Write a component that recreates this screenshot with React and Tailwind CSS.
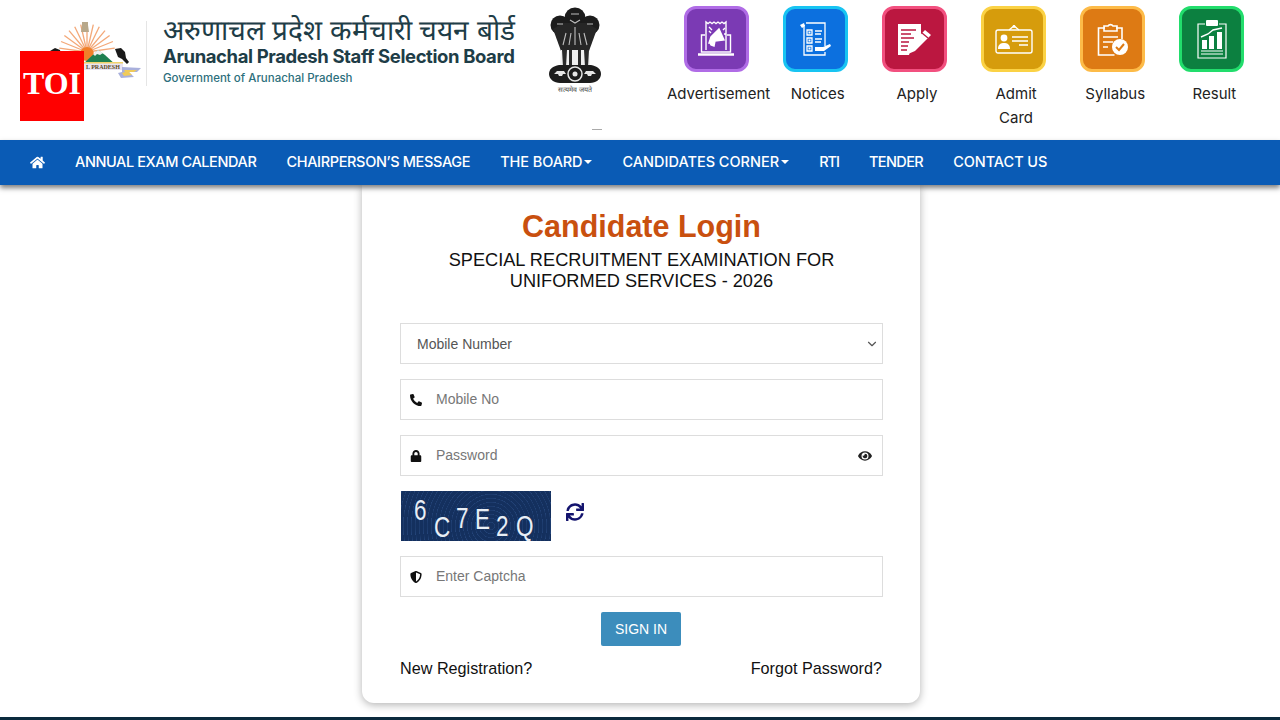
import { FaHome, FaPhoneAlt, FaLock, FaEye, FaShieldAlt, FaSync } from 'react-icons/fa'
import { FiChevronDown } from 'react-icons/fi'

const NAV = [
  { label: 'ANNUAL EXAM CALENDAR', cls: 'tracking-[-0.4px]' },
  { label: 'CHAIRPERSON\u2019S MESSAGE', cls: 'tracking-[-0.35px]' },
  { label: 'THE BOARD', cls: 'tracking-[-0.1px]', caret: true },
  { label: 'CANDIDATES CORNER', cls: 'tracking-[0px]', caret: true },
  { label: 'RTI', cls: 'tracking-[-1px]' },
  { label: 'TENDER', cls: 'tracking-[-0.6px]' },
  { label: 'CONTACT US', cls: 'tracking-[-0.05px]' },
]

function AdIcon() {
  return (
    <svg viewBox="0 0 36 38" className="h-[38px] w-[36px]" fill="none" stroke="white" strokeWidth="1.4">
      <path d="M7 15H3.5v17h29V15H29" />
      <path d="M0 34.5h36" strokeWidth="2.6" />
      <path d="M8 30V2l2 1.5L12 2l2 1.5L16 2l2 1.5L20 2l2 1.5L24 2l2 1.5L28 2v28" />
      <path d="M11 23l2-6 8-8 5 11-9 1-1 5-3-1-1-2z" fill="white" />
      <path d="M25 10l2-2M26 14h2M11 7l3 3M11 11l2 2" />
    </svg>
  )
}

function NoticeIcon() {
  return (
    <svg viewBox="0 0 32 34" className="h-[34px] w-[32px]" fill="none" stroke="white" strokeWidth="1.3">
      <path d="M7 1h19v23M5 3v30h21v-3" />
      <path d="M1 3l4-2 1 3-3 2z" fill="white" stroke="none" />
      <path d="M8 8h5v5H8zM8 16h5v5H8zM8 24h5v5H8z" />
      <path d="M9.5 9.5h2v2h-2zM9.5 17.5h2v2h-2zM9.5 25.5h2v2h-2z" fill="white" stroke="none" />
      <path d="M16 9h7M16 12h6M16 17h7M16 20h6" />
      <path d="M16 25h8l7-3 1 2-7 5h-9z" fill="white" stroke="none" />
    </svg>
  )
}

function ApplyIcon() {
  return (
    <svg viewBox="0 0 34 33" className="h-[33px] w-[34px]">
      <path d="M1 1h23v13L14 25l-2 7H1z" fill="white" />
      <path d="M4 7h15M4 11h10M4 15h13M4 19h8M4 23h7M4 27h6" stroke="#bb1740" strokeWidth="1.4" />
      <path d="M28 7l6 5-16 16-7 3 2-8z" fill="white" />
      <path d="M25 10l6 5" stroke="#bb1740" strokeWidth="1.3" />
    </svg>
  )
}

function AdmitIcon() {
  return (
    <svg viewBox="0 0 38 30" className="h-[30px] w-[38px]" fill="none" stroke="white" strokeWidth="1.4">
      <rect x="1" y="6" width="36" height="23" rx="2" />
      <path d="M14 6l5-4 5 4" />
      <circle cx="19" cy="2.5" r="1.4" fill="white" stroke="none" />
      <circle cx="9" cy="14" r="3.4" fill="white" stroke="none" />
      <path d="M3 25c0-5 3-6 6-6s6 1 6 6z" fill="white" stroke="none" />
      <path d="M17 13h16M17 17h16M24 21h9" />
    </svg>
  )
}

function SyllabusIcon() {
  return (
    <svg viewBox="0 0 31 34" className="h-[34px] w-[31px]" fill="none" stroke="white" strokeWidth="1.6">
      <path d="M8 6H1.5v27h16M19 6h6v11" />
      <path d="M7 9V4h4a3 3 0 0 1 5 0h4v5z" />
      <path d="M6 15h15M6 20h10M6 25h5" />
      <circle cx="23" cy="25" r="8" fill="white" stroke="none" />
      <path d="M19 25l3 3 5-6" stroke="#dd7a14" strokeWidth="2" />
    </svg>
  )
}

function ResultIcon() {
  return (
    <svg viewBox="0 0 30 40" className="h-[40px] w-[30px]" fill="none" stroke="white" strokeWidth="1.2">
      <path d="M8 5H1v34h28V5h-7" />
      <rect x="9" y="1" width="12" height="6" rx="1" fill="white" stroke="none" />
      <path d="M4 18l7-3 5-4 9-2" strokeWidth="1.4" />
      <path d="M5 21h5v9H5zM12 17h5v13h-5zM20 13h5v17h-5z" fill="white" stroke="none" />
      <path d="M4 32h22M4 35h22" />
    </svg>
  )
}

const TILES = [
  { lines: ['Advertisement'], cls: 'bg-[#7b3ab4] border-[#b06ce6]', Icon: AdIcon },
  { lines: ['Notices'], cls: 'bg-[#0c70df] border-[#18c4f2]', Icon: NoticeIcon },
  { lines: ['Apply'], cls: 'bg-[#bb1740] border-[#f2507f]', Icon: ApplyIcon },
  { lines: ['Admit', 'Card'], cls: 'bg-[#d69c0c] border-[#fbd245]', Icon: AdmitIcon },
  { lines: ['Syllabus'], cls: 'bg-[#dd7a14] border-[#fdbb48]', Icon: SyllabusIcon },
  { lines: ['Result'], cls: 'bg-[#0c8040] border-[#22dd6c]', Icon: ResultIcon },
]

function StateLogo() {
  const rays = [-82, -68, -54, -40, -26, -13, 0, 13, 26, 40, 54, 68, 82]
  return (
    <svg viewBox="0 0 100 70" className="h-[70px] w-[100px]">
      {rays.map(r => (
        <path key={r} d="M43 31V3" stroke="#f3a878" strokeWidth="1.3" transform={`rotate(${r} 43 31)`} />
      ))}
      <path d="M38 1h6v3l1 7h-8l1-7z" fill="#b8a88a" />
      <circle cx="43" cy="33" r="7" fill="#f0802a" />
      <path d="M37 45l17-16 7 5 12 11z" fill="#1f8050" />
      <path d="M49 33l5-4 5 3-3 2-3-1-2 2z" fill="#f0f0f0" />
      <path d="M6 30l5-3 5 2 1 4-6 1z" fill="#1a1a1a" />
      <path d="M71 28l6-1 4 4 1 6 3 4-2 2-5-5-4-2z" fill="#1a1a1a" />
      <path d="M10 41h69v8H10z" fill="#e9e3f2" />
      <path d="M10 41h69v1.5H10z" fill="#f2d36b" />
      <text x="42" y="48" fontFamily="Liberation Serif, serif" fontWeight="700" fontSize="6" fill="#5b4a20">
        L PRADESH
      </text>
      <path d="M78 46l19 1-4 4h-8l5 5-13 1-3-5 4-1z" fill="#a9b0dc" />
      <path d="M80 49h13l-3 2h-5l3 3-8 1-2-3 3-1z" fill="#f0cb5a" />
    </svg>
  )
}

function Emblem() {
  return (
    <svg viewBox="0 0 56 78" className="h-[78px] w-[56px]">
      <circle cx="28" cy="11" r="10.5" fill="#1c1c1c" />
      <circle cx="13" cy="18" r="9.5" fill="#1c1c1c" />
      <circle cx="43" cy="18" r="9.5" fill="#1c1c1c" />
      <path d="M6 22l8 22h28l8-22-10-6H16z" fill="#262626" />
      <path d="M24 7h8M23 13l5 3 5-3M28 20v18M10 17h6M40 17h6M19 26l-3 12M37 26l3 12M24 26l-2 12M32 26l2 12" stroke="#bdbdbd" strokeWidth="1.1" fill="none" />
      <path d="M14 43h28l1 17H13z" fill="#efefef" />
      <path d="M15 43l1 17h3l1-17zM22 43v17h3V43zM31 43v17h3V43zM37 43l1 17h3l1-17z" fill="#2a2a2a" />
      <path d="M12 58h32c6 1 10 4 10 9 0 5-5 9-11 9H13C7 76 2 72 2 67c0-5 4-8 10-9z" fill="#1c1c1c" />
      <circle cx="28" cy="67" r="7" fill="none" stroke="#e5e5e5" strokeWidth="1.5" />
      <circle cx="28" cy="67" r="2.5" fill="#e5e5e5" />
      <path d="M7 67l3-3h7l2 3h-3l-1 2h-3l-1-2zM49 67l-3-3h-7l-2 3h3l1 2h3l1-2z" fill="#e5e5e5" />
    </svg>
  )
}

function Field({ icon, placeholder, right }) {
  return (
    <div className="flex h-[41px] items-center border border-[#dddddd] bg-white pl-[9px] pr-[10px]">
      <span className="flex w-[12px] justify-center text-[12px] text-[#111111]">{icon}</span>
      <span className="ml-[14px] flex-1 text-[14px] text-[#777777]">{placeholder}</span>
      {right}
    </div>
  )
}

function Captcha() {
  return (
    <div className="flex items-center pl-px">
      <div className="flex h-[50px] w-[150px] items-center overflow-hidden bg-[#14305e] bg-[repeating-radial-gradient(circle_at_60%_70%,#14305e_0px,#14305e_3px,#24457a_4px)] pl-[13px] font-['Liberation_Sans',sans-serif] text-[30px] text-[#e8eef5]">
        <span className="w-[20px] origin-left -translate-y-[7px] scale-x-75">6</span>
        <span className="w-[22px] origin-left translate-y-[10px] scale-x-75">C</span>
        <span className="w-[19px] origin-left translate-y-px scale-x-75">7</span>
        <span className="w-[21px] origin-left translate-y-[2px] scale-x-75">E</span>
        <span className="w-[20px] origin-left translate-y-[9px] scale-x-75">2</span>
        <span className="origin-left translate-y-[9px] scale-x-75">Q</span>
      </div>
      <FaSync className="ml-[15px] -mt-[8px] text-[18px] text-[#14146e]" />
    </div>
  )
}

export default function App() {
  return (
    <div className="relative flex h-[720px] flex-col overflow-hidden bg-white font-['Liberation_Sans',sans-serif]">
      <header className="flex h-[140px] shrink-0 bg-white">
        <div className="flex w-[669px] items-start pl-[44px] pt-[21px]">
          <StateLogo />
          <div className="ml-[2px] h-[65px] w-px bg-[#e5e5e5]" />
          <div className="ml-[16px] -mt-[5px] w-[370px] font-['Inter',sans-serif] text-[#1e3d47]">
            <div className="text-[28px] font-medium leading-[28px] whitespace-nowrap">
              अरुणाचल प्रदेश कर्मचारी चयन बोर्ड
            </div>
            <div className="mt-px text-[18.5px] font-bold leading-[22px] tracking-[-0.4px] whitespace-nowrap">
              Arunachal Pradesh Staff Selection Board
            </div>
            <div className="mt-[4px] text-[11.5px] font-medium leading-[14px] text-[#2d6f7c]">
              Government of Arunachal Pradesh
            </div>
          </div>
          <div className="ml-[14px] -mt-[14px] flex flex-col items-center">
            <Emblem />
            <div className="text-[7px] leading-[9px] text-[#444444] whitespace-nowrap">सत्यमेव जयते</div>
            <div className="mt-[35px] h-px w-[10px] self-end mr-[1px] bg-[#aaaaaa]" />
          </div>
        </div>
        <div className="grid w-[595px] grid-cols-6 content-start pt-[6px]">
          {TILES.map(({ lines, cls, Icon }) => (
            <div key={lines[0]} className="flex flex-col items-center">
              <div className={`mr-[5px] flex h-[66px] w-[65px] items-center justify-center rounded-[12px] border-[3px] ${cls}`}>
                <Icon />
              </div>
              <div className="mt-[10px] whitespace-nowrap text-center font-['Inter',sans-serif] text-[15px] leading-[24px] text-[#222222]">
                {lines.map(line => (
                  <div key={line}>{line}</div>
                ))}
              </div>
            </div>
          ))}
        </div>
      </header>

      <nav className="relative z-10 flex h-[45px] shrink-0 items-center gap-[30px] bg-[#0a5bb5] pb-px pl-[30px] font-['Inter',sans-serif] text-[14.5px] font-medium text-white shadow-[0_3px_5px_rgba(0,0,0,0.5)]">
        <FaHome className="text-[15px]" />
        {NAV.map(item => (
          <span key={item.label} className={`flex items-center whitespace-nowrap ${item.cls}`}>
            {item.label}
            {item.caret && <span className="ml-[2px] border-x-[4px] border-t-[4px] border-x-transparent border-t-white" />}
          </span>
        ))}
      </nav>

      <main className="flex flex-1 justify-center pl-[2px]">
        <div className="flex h-[518px] w-[558px] flex-col rounded-b-[12px] bg-white pl-[38px] pr-[37px] shadow-[0_2px_8px_rgba(0,0,0,0.3)]">
          <h1 className="mt-[23px] text-center text-[30.5px] font-bold leading-[36px] text-[#c9500f]">Candidate Login</h1>
          <p className="mt-[6px] text-center text-[18.2px] leading-[21px] text-[#111111]">
            SPECIAL RECRUITMENT EXAMINATION FOR
            <br />
            UNIFORMED SERVICES - 2026
          </p>
          <div className="mt-[31px] flex flex-col gap-[15px]">
            <div className="flex h-[41px] items-center justify-between border border-[#dddddd] bg-white pl-[16px] pr-[3px] pt-px text-[14px] text-[#555555]">
              Mobile Number
              <FiChevronDown className="text-[14px]" />
            </div>
            <Field icon={<FaPhoneAlt />} placeholder="Mobile No" />
            <Field icon={<FaLock />} placeholder="Password" right={<FaEye className="text-[14px] text-[#222222]" />} />
            <Captcha />
            <Field icon={<FaShieldAlt className="text-[14px]" />} placeholder="Enter Captcha" />
          </div>
          <button className="ml-[201px] mt-[15px] h-[34px] w-[80px] rounded-[2px] bg-[#3c8dbc] text-[14px] text-white">SIGN IN</button>
          <div className="mt-[12px] flex justify-between pr-px text-[16.2px] leading-[20px] text-[#111111]">
            <span>New Registration?</span>
            <span>Forgot Password?</span>
          </div>
        </div>
      </main>

      <div className="h-[3px] shrink-0 bg-[#0b2a3d]" />

      <div className="absolute left-[20px] top-[51px] z-20 flex h-[70px] w-[64px] items-center justify-center bg-[#ff0000] pb-[6px] font-['Liberation_Serif',serif] text-[32px] font-bold text-white">
        TOI
      </div>
    </div>
  )
}
